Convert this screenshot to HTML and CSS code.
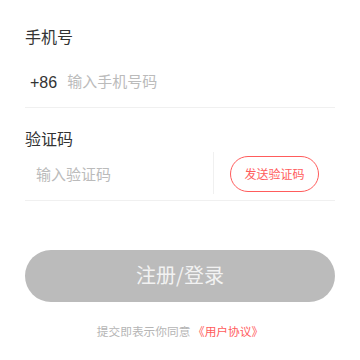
FILE: index.html
```html
<!DOCTYPE html>
<html>
<head>
    <meta name="viewport" content="width=device-width, initial-scale=1.0">
    <title>登录</title>
    <link rel="stylesheet" href="styles.css">
</head>
<body>
    <div class="wrapper">
        <div class="field">
            <div class="label">手机号</div>
            <div class="row">
                <span class="prefix">+86</span>
                <input type="tel" class="phone" placeholder="输入手机号码">
            </div>
        </div>

        <div class="field field-code">
            <div class="label">验证码</div>
            <div class="row">
                <input type="text" class="code" placeholder="输入验证码">
                <span class="sep"></span>
                <button type="button" class="send">发送验证码</button>
            </div>
        </div>

        <button type="submit" class="submit">注册/登录</button>

        <div class="agree">提交即表示你同意 <a href="#">《用户协议》</a></div>
    </div>
</body>
</html>
```

FILE: styles.css
```css
body {
    margin: 0;
    background: #fff;
    font-family: "Noto Sans CJK SC", "Noto Sans", sans-serif;
}
.wrapper {
    padding: 26px 25px 0;
}
.label {
    font-size: 16px;
    line-height: 20px;
    color: #333;
}
.field-code {
    margin-top: 20px;
}
.row {
    display: flex;
    align-items: center;
    height: 48px;
    border-bottom: 1px solid #f0f0f0;
}
.field .row {
    margin-top: 13px;
}
.field-code .row {
    margin-top: 4px;
}
.prefix {
    font-family: "Liberation Sans", Arial, sans-serif;
    font-size: 16px;
    color: #333;
    padding-left: 5px;
    margin-right: 10px;
}
input {
    flex: 1;
    min-width: 0;
    border: none;
    outline: none;
    padding: 0 0 5px;
    font-family: inherit;
    font-size: 15px;
    color: #333;
    background: transparent;
}
input::placeholder {
    color: #bbb;
}
.code {
    padding-left: 11px;
}
.sep {
    width: 1px;
    height: 42px;
    background: #f0f0f0;
    margin-top: -6px;
}
.send {
    margin: 0 16px 4px 16px;
    width: 89px;
    height: 36px;
    border: 1.5px solid #ff5c5c;
    border-radius: 18px;
    background: #fff;
    color: #ff5c5c;
    font-family: inherit;
    font-size: 12px;
    padding: 0 0 2px;
    cursor: pointer;
}
.submit {
    display: block;
    width: 100%;
    height: 52px;
    margin-top: 49px;
    border: none;
    border-radius: 26px;
    background: #bbbbbb;
    color: #f2f2f2;
    font-family: inherit;
    font-size: 20px;
    padding: 0 0 3px;
    cursor: pointer;
}
.agree {
    margin-top: 21px;
    text-align: center;
    font-size: 11.7px;
    line-height: 16px;
    color: #b5b5b5;
}
.agree a {
    color: #ff5c5c;
    text-decoration: none;
}
```
